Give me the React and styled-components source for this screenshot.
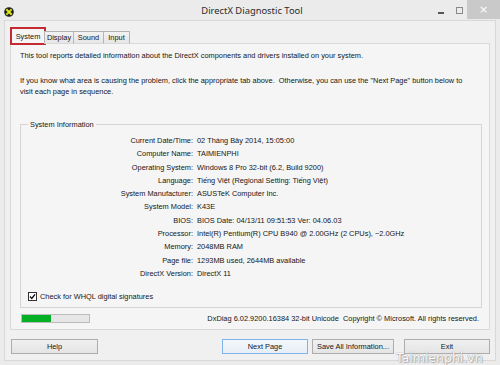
import React from "react";
import styled, { createGlobalStyle } from "styled-components";

const Global = createGlobalStyle`
  html, body { margin: 0; padding: 0; background: #ebebeb; }
  body { width: 500px; height: 365px; overflow: hidden; font-family: "Liberation Sans", Arial, sans-serif; }
`;

const Window = styled.div`
  position: relative;
  width: 500px;
  height: 365px;
  box-sizing: border-box;
  background: #ebebeb;
  display: flex;
  flex-direction: column;
  padding: 0 4px 4px;
  color: #151515;
  font-size: 7.4px;
  overflow: hidden;
`;

const TitleBar = styled.div`
  height: 20px;
  flex: none;
  margin: 0 -4px;
  padding-left: 4px;
  display: grid;
  grid-template-columns: 1fr auto 1fr;
  align-items: start;
`;

const AppIcon = styled.svg`
  width: 10px;
  height: 10px;
  margin-top: 7px;
`;

const Title = styled.div`
  font-family: "Noto Sans", "Liberation Sans", sans-serif;
  font-size: 9.4px;
  line-height: 20px;
  color: #2b2b2b;
  padding-top: 1px;
`;

const Caption = styled.div`
  display: flex;
  justify-content: flex-end;
  align-items: stretch;
  height: 19px;
`;

const CapBtn = styled.div`
  width: ${(p) => p.w}px;
  display: flex;
  align-items: center;
  justify-content: center;
  background: ${(p) => (p.close ? "#c9c9c9" : "transparent")};
  color: #fff;
  font-size: 11px;
  font-family: "DejaVu Sans", sans-serif;
`;

const MinGlyph = styled.span`
  width: 6px;
  height: 2px;
  background: #555;
  margin-top: 6px;
`;

const MaxGlyph = styled.span`
  width: 5px;
  height: 5px;
  border: 1px solid #8a8a8a;
  margin-top: 2px;
`;

const Client = styled.div`
  flex: 1;
  background: #f0f0f0;
  border: 1px solid #d8d8d8;
  padding: 7px 5px 0;
  display: flex;
  flex-direction: column;
`;

const TabStrip = styled.div`
  height: 16px;
  display: flex;
  align-items: flex-end;
  margin-bottom: -1px;
  position: relative;
  z-index: 1;
  padding-left: 1px;
`;

const Tab = styled.div`
  box-sizing: border-box;
  width: ${(p) => p.w}px;
  height: ${(p) => (p.active ? 16 : 13)}px;
  border: 1px solid ${(p) => (p.active ? "#d9d9d9" : "#b4b4b4")};
  border-bottom: ${(p) => (p.active ? "none" : "1px solid #d9d9d9")};
  margin-left: ${(p) => (p.active ? 0 : -1)}px;
  background: ${(p) => (p.active ? "#f5f5f5" : "linear-gradient(#f2f2f2, #e6e6e6)")};
  display: flex;
  align-items: center;
  justify-content: center;
  line-height: 11px;
  padding-bottom: ${(p) => (p.active ? 1 : 0)}px;
  outline: ${(p) => (p.marked ? "2px solid #c42b30" : "none")};
  outline-offset: -1px;
  &:first-child { margin-left: 0; }
`;

const Panel = styled.div`
  box-sizing: border-box;
  height: 287px;
  border: 1px solid #d9d9d9;
  background: #f5f5f5;
  padding: 6px 7px 0 9px;
  display: flex;
  flex-direction: column;
`;

const Para = styled.p`
  margin: ${(p) => p.mt || 0}px 0 0;
  line-height: 11px;
  white-space: pre-wrap;
`;

const Group = styled.fieldset`
  margin: 22px 0 0;
  padding: 4px 4px 5px;
  border: 1px solid #d5d5d5;
  min-width: 0;
`;

const Legend = styled.legend`
  padding: 0 2px;
  margin-left: 3px;
  line-height: 11px;
`;

const InfoGrid = styled.div`
  display: grid;
  grid-template-columns: 168px 1fr;
  column-gap: 4px;
  line-height: 13.3px;
`;

const Label = styled.div`
  text-align: right;
  white-space: nowrap;
`;

const Value = styled.div`
  white-space: nowrap;
`;

const CheckRow = styled.label`
  display: flex;
  align-items: center;
  gap: 3px;
  margin: 11px 0 0 3px;
  line-height: 11px;
`;

const Box = styled.span`
  box-sizing: border-box;
  width: 9px;
  height: 9px;
  border: 1px solid #333;
  background: #fff;
  display: flex;
  align-items: center;
  justify-content: center;
`;

const StatusRow = styled.div`
  display: flex;
  align-items: center;
  justify-content: space-between;
  height: 9px;
  margin: 6px 3px 0 1px;
`;

const Progress = styled.div`
  box-sizing: border-box;
  width: 69px;
  height: 9px;
  border: 1px solid #bcbcbc;
  background: #e6e6e6;
  display: flex;
`;

const Fill = styled.div`
  background: #06b025;
  height: 100%;
`;

const Version = styled.div`
  white-space: pre;
  line-height: 9px;
`;

const ButtonRow = styled.div`
  display: flex;
  margin-top: 9px;
  padding-left: 1px;
`;

const Button = styled.div`
  box-sizing: border-box;
  width: ${(p) => p.w}px;
  height: 15px;
  margin-left: ${(p) => p.ml || 0}px;
  border: 1px solid ${(p) => (p.primary ? "#7eb4ea" : "#adadad")};
  background: ${(p) => (p.primary ? "linear-gradient(#f3f8fc, #e6eef6)" : "linear-gradient(#f0f0f0, #e4e4e4)")};
  display: flex;
  align-items: center;
  justify-content: center;
  line-height: 9px;
`;

const Spacer = styled.div`
  flex: 1;
`;

const Watermark = styled.div`
  position: absolute;
  left: 396px;
  top: 352px;
  font-family: "DejaVu Sans", sans-serif;
  font-size: 12.5px;
  line-height: 12px;
  color: #fdfdfd;
  white-space: nowrap;
  text-shadow: 0 0 1px #9a9a9a, 0 0 1px #9a9a9a, 1px 1px 1px #b0b0b0;
`;

const rows = [
  ["Current Date/Time:", "02 Tháng Bảy 2014, 15:05:00"],
  ["Computer Name:", "TAIMIENPHI"],
  ["Operating System:", "Windows 8 Pro 32-bit (6.2, Build 9200)"],
  ["Language:", "Tiếng Việt (Regional Setting: Tiếng Việt)"],
  ["System Manufacturer:", "ASUSTeK Computer Inc."],
  ["System Model:", "K43E"],
  ["BIOS:", "BIOS Date: 04/13/11 09:51:53 Ver: 04.06.03"],
  ["Processor:", "Intel(R) Pentium(R) CPU B940 @ 2.00GHz (2 CPUs), ~2.0GHz"],
  ["Memory:", "2048MB RAM"],
  ["Page file:", "1293MB used, 2644MB available"],
  ["DirectX Version:", "DirectX 11"],
];

export default function App() {
  return (
    <>
      <Global />
      <Window>
        <TitleBar>
          <AppIcon viewBox="0 0 10 10">
            <circle cx="5" cy="5" r="4.8" fill="#1d1d1d" />
            <path d="M2.3 2.3 L7.7 7.7" stroke="#e6e01a" strokeWidth="2" />
            <path d="M7.7 2.3 L2.3 7.7" stroke="#b8d82a" strokeWidth="2" />
            <circle cx="5" cy="5" r="1" fill="#f4f000" />
          </AppIcon>
          <Title>DirectX Diagnostic Tool</Title>
          <Caption>
            <CapBtn w={23}><MinGlyph /></CapBtn>
            <CapBtn w={15}><MaxGlyph /></CapBtn>
            <CapBtn w={33} close>×</CapBtn>
          </Caption>
        </TitleBar>
        <Client>
          <TabStrip>
            <Tab active marked w={34}>System</Tab>
            <Tab w={30}>Display</Tab>
            <Tab w={31}>Sound</Tab>
            <Tab w={27}>Input</Tab>
          </TabStrip>
          <Panel>
            <Para>This tool reports detailed information about the DirectX components and drivers installed on your system.</Para>
            <Para mt={14}>
              {'If you know what area is causing the problem, click the appropriate tab above.  Otherwise, you can use the "Next Page" button below to'}
              <br />
              visit each page in sequence.
            </Para>
            <Group>
              <Legend>System Information</Legend>
              <InfoGrid>
                {rows.map(([k, v]) => (
                  <React.Fragment key={k}>
                    <Label>{k}</Label>
                    <Value>{v}</Value>
                  </React.Fragment>
                ))}
              </InfoGrid>
              <CheckRow>
                <Box>
                  <svg width="7" height="7" viewBox="0 0 7 7">
                    <path d="M1 3.6 L2.8 5.4 L6 1.4" fill="none" stroke="#111" strokeWidth="1.4" />
                  </svg>
                </Box>
                Check for WHQL digital signatures
              </CheckRow>
            </Group>
            <StatusRow>
              <Progress>
                <Fill style={{ width: "44%" }} />
              </Progress>
              <Version>{"DxDiag 6.02.9200.16384 32-bit Unicode  Copyright © Microsoft. All rights reserved."}</Version>
            </StatusRow>
          </Panel>
          <ButtonRow>
            <Button w={87}>Help</Button>
            <Spacer />
            <Button w={86} primary>Next Page</Button>
            <Button w={82} ml={4}>Save All Information...</Button>
            <Button w={86} ml={10}>Exit</Button>
          </ButtonRow>
        </Client>
        <Watermark>Taimienphi.vn</Watermark>
      </Window>
    </>
  );
}
